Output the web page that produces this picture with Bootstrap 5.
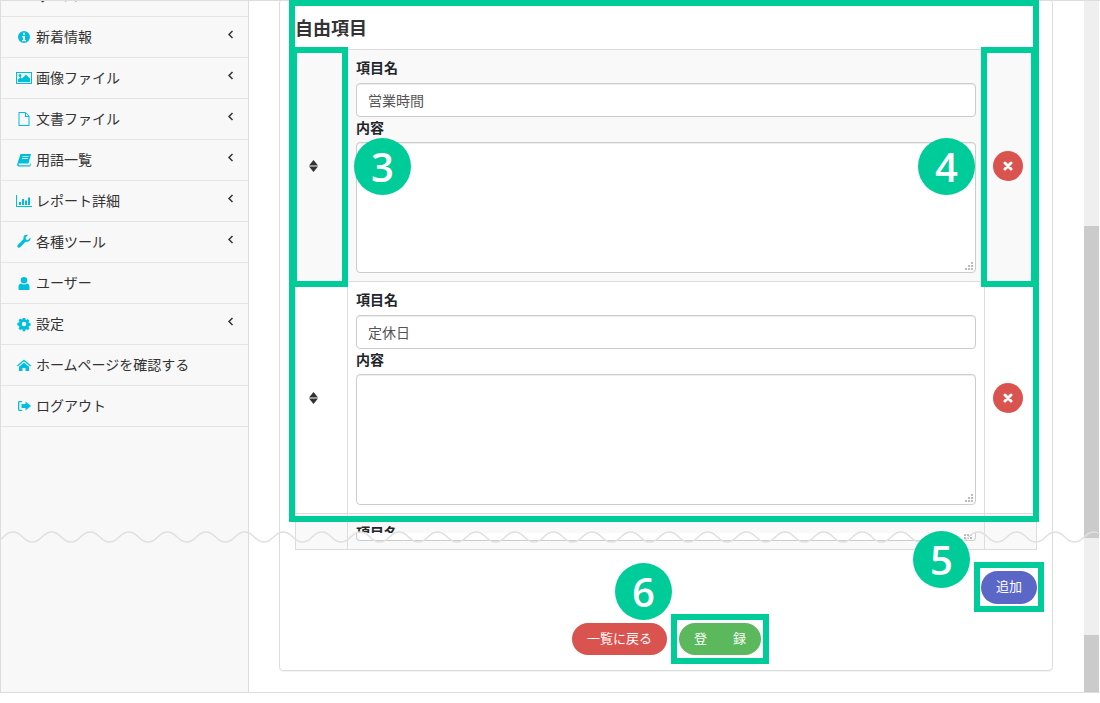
<!DOCTYPE html>
<html lang="ja">
<head>
    <meta charset="UTF-8">
    <title>自由項目</title>
    <link href="https://cdn.jsdelivr.net/npm/bootstrap@5.3.0/dist/css/bootstrap.min.css" rel="stylesheet">
    <style>
        body {
            font-family: "Noto Sans CJK JP", "Noto Sans", sans-serif;
            font-size: 14px;
            color: #333;
            background: #fff;
            overflow: hidden;
        }

        /* page frame */
        .app-frame { height: 693px; border-bottom: 1px solid #ddd; border-top: 1px solid #ddd; overflow: hidden; }

        /* sidebar */
        .side-menu { width: 249px; height: 100%; background: #f8f8f8; border-left: 1px solid #ddd; border-right: 1px solid #ddd; overflow: hidden; }
        .side-item { height: 41px; padding: 0 14px 0 15px; border-bottom: 1px solid #e5e5e5; gap: 4px; color: #333; text-decoration: none; }
        .side-first { margin-top: -25px; }
        .side-ico { width: 16px; height: 16px; margin-bottom: 1px; fill: #00bfdc; flex: none; }
        .side-label { line-height: 1; margin-bottom: 3px; }
        .side-arrow { width: 7px; height: 9px; margin-top: -5px; fill: none; stroke: #333; stroke-width: 1.5; }

        /* main area */
        .main-area { padding-left: 30px; padding-right: 31px; min-width: 0; }
        .form-box { margin-top: -2px; border: 1px solid #ddd; border-radius: 4px; padding: 0 15px 15px; box-shadow: 0 1px 1px rgba(0,0,0,.05); }
        .free-title { font-size: 18px; font-weight: 700; line-height: 24px; padding-top: 15px; height: 49px; }

        .item-table { width: 742px; table-layout: fixed; border-color: #ddd; }
        .item-table td { padding: 0; border: 1px solid #ddd; vertical-align: middle; }
        .item-table tr.is-odd td { background: #f9f9f9; }
        .col-drag { width: 52px; padding-left: 13px !important; text-align: left; }
        .col-del { width: 52px; padding-left: 8px !important; text-align: left; }
        .item-table td.field-cell { height: 232px; padding: 8px !important; vertical-align: top; }
        .field-name { display: block; font-weight: 700; font-size: 14px; line-height: 18px; margin: 0 0 7px; }
        .field-name2 { margin: 0 0 5px; line-height: 20px; }
        .field-input { height: 34px; font-size: 14px; padding: 6px 12px 6px 11px; border-radius: 4px; border: 1px solid #ccc; color: #555; box-shadow: inset 0 1px 1px rgba(0,0,0,.075); font-family: inherit; }
        .field-wrap { height: 131px; }
        .field-text { height: 131px; resize: none; border-radius: 4px; border: 1px solid #ccc; box-shadow: inset 0 1px 1px rgba(0,0,0,.075); }
        .grip-dots { position: absolute; right: 3px; bottom: 3px; width: 8px; height: 8px; fill: #bbb; }
        .cut-row td { height: 36px; }
        .item-table td.cut-cell { padding: 9px 8px 0 !important; height: 36px; vertical-align: top; }
        .cut-cell .field-name { margin: 0 0 -8px; }
        .cut-field { height: 8px; background: #fff; border: 1px solid #ccc; border-top: 0; border-radius: 0 0 4px 4px; }
        .cut-field .grip-dots { bottom: 1px; height: 5px; }

        .drag-ico { width: 9px; height: 12px; fill: #333; display: block; }
        .del-btn { display: block; width: 30px; height: 30px; padding: 0; border: 0; background: #d9534f; }
        .del-btn svg { display: block; margin: auto; width: 10px; height: 10px; stroke: #fff; stroke-width: 3; stroke-linecap: round; }

        .pill-btn { font-size: 13px; line-height: 19px; padding: 4px 15px 8px; border: 0; border-radius: 17px; color: #fff; }
        .pill-add { background: #5b67c7; margin-top: 21px; height: 33px; }
        .pill-back { background: #d9534f; height: 32px; width: 95px; padding-left: 0; padding-right: 0; }
        .pill-save { background: #5cb85c; height: 32px; }
        .action-row { margin-top: 19px; padding-left: 1px; gap: 12px; }

        /* scrollbar */
        .scroll-col { width: 15px; margin-right: 1px; background: #efefef; flex: none; }
        .scroll-track-a { height: 225px; }
        .scroll-thumb-a { height: 312px; background: #cbcbcb; }
        .scroll-track-b { height: 97px; }
        .scroll-thumb-b { height: 60px; background: #cbcbcb; }

        /* things drawn over the screenshot */
        .note-box { position: absolute; border: 6px solid #00cc99; pointer-events: none; }
        .note-num { position: absolute; width: 57px; height: 57px; background: #00cc99; color: #fff; font-family: "Open Sans", sans-serif; font-weight: 600; font-size: 40px; line-height: 57px; text-align: center; border-radius: 50%; }
        .cut-wave { position: absolute; left: 0; top: 528px; width: 1100px; height: 20px; }
    </style>
</head>
<body>
    <div class="app-frame d-flex">
        <!-- Sidebar -->
        <nav class="side-menu flex-shrink-0">
            <a class="side-item side-first d-flex align-items-center" href="#"><svg class="side-ico invisible" viewBox="0 0 16 16"></svg><span class="side-label">サーバ</span></a>
            <a class="side-item d-flex align-items-center" href="#">
                <svg class="side-ico" viewBox="0 0 16 16"><path fill-rule="evenodd" d="M8 2a6 6 0 1 0 0 12A6 6 0 0 0 8 2zM7 3.800h2v2H7zM6 7h3v4h1v1.300H6V11h1V8.300H6z"/></svg>
                <span class="side-label flex-grow-1">新着情報</span>
                <svg class="side-arrow" viewBox="0 0 7 9"><path d="M5.500 1 2 4.500 5.500 8"/></svg>
            </a>
            <a class="side-item d-flex align-items-center" href="#">
                <svg class="side-ico" viewBox="0 0 16 16"><path fill-rule="evenodd" d="M0 2h16v12H0zM1 3v10h14V3zM2 12V9.500L4.500 7 6 8.500 10 4.500l4 4V12zM4 4a1.500 1.500 0 1 1 0 3 1.500 1.500 0 0 1 0-3z"/></svg>
                <span class="side-label flex-grow-1">画像ファイル</span>
                <svg class="side-arrow" viewBox="0 0 7 9"><path d="M5.500 1 2 4.500 5.500 8"/></svg>
            </a>
            <a class="side-item d-flex align-items-center" href="#">
                <svg class="side-ico" viewBox="0 0 16 16"><path fill-rule="evenodd" d="M2.500 1h7L13.500 5v10h-11zM3.500 2v12h9V6H9V2zM10 2.600V5h2.400z"/></svg>
                <span class="side-label flex-grow-1">文書ファイル</span>
                <svg class="side-arrow" viewBox="0 0 7 9"><path d="M5.500 1 2 4.500 5.500 8"/></svg>
            </a>
            <a class="side-item d-flex align-items-center" href="#">
                <svg class="side-ico" viewBox="0 0 16 16"><path d="M4.500 2h10.500l-2.500 9.500H3.500c-.7 0-1 .4-1 .9s.4.800 1 .800h10.300l.5-1.700.7.300-.8 2.700H3c-1.300 0-2.100-1-1.800-2.300z"/><path fill="none" stroke="#f8f8f8" stroke-width=".8" d="M6.500 4.500h6M6 6.500h6"/></svg>
                <span class="side-label flex-grow-1">用語一覧</span>
                <svg class="side-arrow" viewBox="0 0 7 9"><path d="M5.500 1 2 4.500 5.500 8"/></svg>
            </a>
            <a class="side-item d-flex align-items-center" href="#">
                <svg class="side-ico" viewBox="0 0 16 16"><path d="M0 2h1v11h15v1H0zM3 9h2v3H3zM6 6h2v6H6zM9 7.500h2V12H9zM12 4.500h2V12h-2z"/></svg>
                <span class="side-label flex-grow-1">レポート詳細</span>
                <svg class="side-arrow" viewBox="0 0 7 9"><path d="M5.500 1 2 4.500 5.500 8"/></svg>
            </a>
            <a class="side-item d-flex align-items-center" href="#">
                <svg class="side-ico" viewBox="0 0 16 16"><path d="M14.500 3.500 12 6l-2-.5L9.500 3.500 12 1C10 .4 8 1.200 7.500 3c-.2.800-.1 1.500.1 2.100L2 10.700c-.9.900-.9 1.900-.2 2.600s1.800.7 2.600-.2l5.500-5.500c.7.200 1.400.3 2.100.1 1.900-.5 2.900-2.500 2.500-4.200z"/></svg>
                <span class="side-label flex-grow-1">各種ツール</span>
                <svg class="side-arrow" viewBox="0 0 7 9"><path d="M5.500 1 2 4.500 5.500 8"/></svg>
            </a>
            <a class="side-item d-flex align-items-center" href="#">
                <svg class="side-ico" viewBox="0 0 16 16"><path d="M8 2a3.300 3.300 0 1 1 0 6.600A3.300 3.300 0 0 1 8 2zM2.500 14v-2.300C2.500 9.800 3.700 8.500 5.200 8.500c.8.600 1.700.9 2.800.9s2-.3 2.800-.9c1.500 0 2.700 1.300 2.700 3.200V14c0 .5-.4 1-1 1h-9c-.6 0-1-.5-1-1z"/></svg>
                <span class="side-label flex-grow-1">ユーザー</span>
            </a>
            <a class="side-item d-flex align-items-center" href="#">
                <svg class="side-ico" viewBox="0 0 16 16"><path fill-rule="evenodd" d="M6.800 2h2.400l.3 1.600 1 .4 1.300-.9 1.700 1.700-.9 1.300.4 1 1.600.3v2.400l-1.600.3-.4 1 .9 1.300-1.700 1.700-1.300-.9-1 .4-.3 1.600H6.800l-.3-1.600-1-.4-1.300.9-1.700-1.700.9-1.300-.4-1L1.400 9.200V6.800L3 6.500l.4-1-.9-1.300 1.700-1.700 1.300.9 1-.4zM8 5.800a2.200 2.200 0 1 0 0 4.400 2.200 2.200 0 0 0 0-4.400z"/></svg>
                <span class="side-label flex-grow-1">設定</span>
                <svg class="side-arrow" viewBox="0 0 7 9"><path d="M5.500 1 2 4.500 5.500 8"/></svg>
            </a>
            <a class="side-item d-flex align-items-center" href="#">
                <svg class="side-ico" viewBox="0 0 16 16"><path d="M8 2.500 15 8.500l-.8.900L8 4.200 1.800 9.400 1 8.500zM3 9.800 8 5.600l5 4.200V14H9.500v-3h-3v3H3z"/></svg>
                <span class="side-label flex-grow-1">ホームページを確認する</span>
            </a>
            <a class="side-item d-flex align-items-center" href="#">
                <svg class="side-ico" viewBox="0 0 16 16"><path d="M6 3H3.500C2.600 3 2 3.600 2 4.500v7c0 .9.600 1.500 1.500 1.500H6v-1.300H3.300V4.300H6zM9.500 3.500 15 8l-5.500 4.500V10H5.500V6h4z"/></svg>
                <span class="side-label flex-grow-1">ログアウト</span>
            </a>
        </nav>

        <!-- Main -->
        <main class="main-area flex-grow-1">
            <div class="form-box">
                <div class="free-title">自由項目</div>
                <table class="item-table table mb-0">
                    <tbody>
                        <tr class="is-odd">
                            <td class="col-drag"><svg class="drag-ico" viewBox="0 0 9 12"><path d="M4.500 0 9 5.500H0zM0 6.500h9L4.500 12z"/></svg></td>
                            <td class="field-cell">
                                <label class="field-name">項目名</label>
                                <input class="form-control field-input" type="text" value="営業時間">
                                <label class="field-name field-name2">内容</label>
                                <div class="field-wrap position-relative">
                                    <textarea class="form-control field-text"></textarea>
                                    <svg class="grip-dots" viewBox="0 0 8 8"><path d="M6 0h2v2H6zM3 3h2v2H3zM6 3h2v2H6zM0 6h2v2H0zM3 6h2v2H3zM6 6h2v2H6z"/></svg>
                                </div>
                            </td>
                            <td class="col-del"><button class="del-btn btn rounded-circle" type="button"><svg viewBox="0 0 10 10"><path d="M2 2l6 6M8 2l-6 6"/></svg></button></td>
                        </tr>
                        <tr>
                            <td class="col-drag"><svg class="drag-ico" viewBox="0 0 9 12"><path d="M4.500 0 9 5.500H0zM0 6.500h9L4.500 12z"/></svg></td>
                            <td class="field-cell">
                                <label class="field-name">項目名</label>
                                <input class="form-control field-input" type="text" value="定休日">
                                <label class="field-name field-name2">内容</label>
                                <div class="field-wrap position-relative">
                                    <textarea class="form-control field-text"></textarea>
                                    <svg class="grip-dots" viewBox="0 0 8 8"><path d="M6 0h2v2H6zM3 3h2v2H3zM6 3h2v2H6zM0 6h2v2H0zM3 6h2v2H3zM6 6h2v2H6z"/></svg>
                                </div>
                            </td>
                            <td class="col-del"><button class="del-btn btn rounded-circle" type="button"><svg viewBox="0 0 10 10"><path d="M2 2l6 6M8 2l-6 6"/></svg></button></td>
                        </tr>
                        <tr class="is-odd cut-row">
                            <td class="col-drag"></td>
                            <td class="cut-cell">
                                <label class="field-name">項目名</label>
                                <div class="cut-field position-relative">
                                    <svg class="grip-dots" viewBox="0 0 8 5"><path d="M0 0h2v2H0zM3 0h2v2H3zM6 0h2v2H6zM0 3h2v2H0zM3 3h2v2H3zM6 3h2v2H6z"/></svg>
                                </div>
                            </td>
                            <td class="col-del"></td>
                        </tr>
                    </tbody>
                </table>
                <div class="d-flex justify-content-end">
                    <button class="pill-btn pill-add btn" type="button">追加</button>
                </div>
                <div class="action-row d-flex justify-content-center">
                    <button class="pill-btn pill-back btn" type="button">一覧に戻る</button>
                    <button class="pill-btn pill-save btn" type="button">登　　録</button>
                </div>
            </div>
        </main>

        <!-- Scrollbar -->
        <div class="scroll-col">
            <div class="scroll-track-a"></div>
            <div class="scroll-thumb-a"></div>
            <div class="scroll-track-b"></div>
            <div class="scroll-thumb-b"></div>
        </div>
    </div>

    <!-- torn-page line -->
    <svg class="cut-wave" viewBox="0 0 1100 20" fill="none"><path id="wave" stroke="#e0e0e0" stroke-width="1.500"/></svg>

    <!-- annotations -->
    <div class="note-box" style="left:289px;top:0;width:750px;height:522px"></div>
    <div class="note-box" style="left:291px;top:47px;width:57px;height:240px"></div>
    <div class="note-box" style="left:981px;top:47px;width:56px;height:240px"></div>
    <div class="note-box" style="left:974px;top:562px;width:70px;height:50px"></div>
    <div class="note-box" style="left:671px;top:614px;width:98px;height:50px"></div>
    <div class="note-num" style="left:354px;top:138px">3</div>
    <div class="note-num" style="left:918px;top:138px">4</div>
    <div class="note-num" style="left:913px;top:531px">5</div>
    <div class="note-num" style="left:615px;top:563px">6</div>

    <script src="https://cdn.jsdelivr.net/npm/bootstrap@5.3.0/dist/js/bootstrap.bundle.min.js"></script>
    <script>
        // build the wavy cut line
        let d = 'M-35.25 9';
        let up = true;
        for (let x = -35.25; x < 1100; x += 19.3) {
            d += ` Q${x + 9.65} ${up ? -1 : 19} ${x + 19.3} 9`;
            up = !up;
        }
        document.getElementById('wave').setAttribute('d', d);
    </script>
</body>
</html>
